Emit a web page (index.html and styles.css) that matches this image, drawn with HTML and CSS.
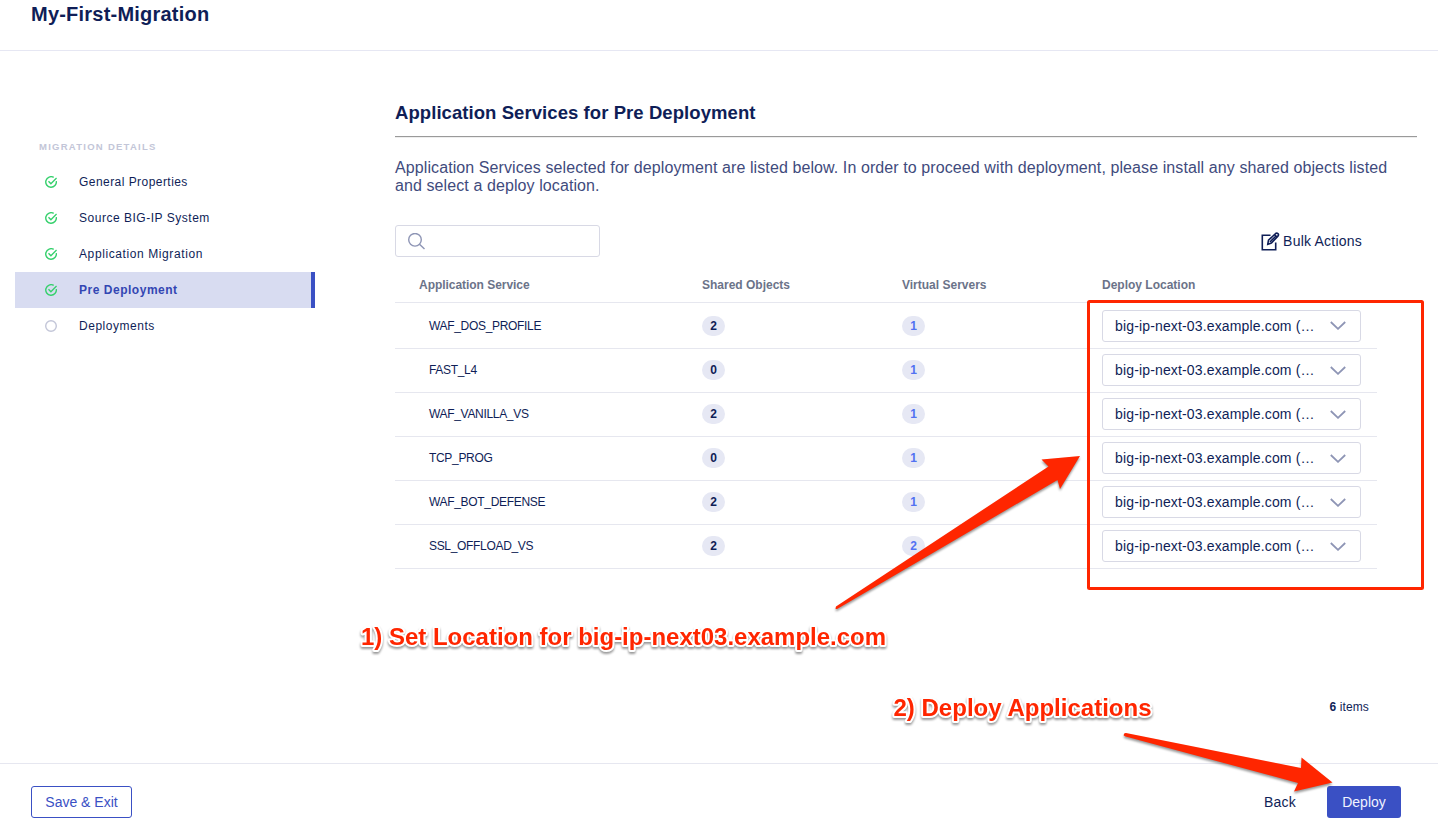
FILE: index.html
```html
<!DOCTYPE html>
<html lang="en">
<head>
<meta charset="utf-8">
<title>My-First-Migration</title>
<link rel="stylesheet" href="styles.css">
</head>
<body>
<svg class="defs" width="0" height="0" aria-hidden="true">
  <symbol id="done" viewBox="0 0 12 12"><path d="M11.3 5.2A5.3 5.3 0 1 1 8.700 1.4M3.5 5.300l2.400 2.400L11.600 2" fill="none" stroke="#35d06c" stroke-width="1.4"/></symbol>
  <symbol id="chevron" viewBox="0 0 16 9"><path d="M.8 1l7.2 6.8L15.2 1" fill="none" stroke="#8e95b5" stroke-width="1.8"/></symbol>
</svg>
<div class="page">
  <header class="header"><h1 class="title">My-First-Migration</h1></header>
  <div class="body">
    <nav class="steps">
      <div class="steps-title">MIGRATION DETAILS</div>
      <div class="step tight"><svg class="step-icon"><use href="#done"/></svg><span>General Properties</span></div>
      <div class="step"><svg class="step-icon"><use href="#done"/></svg><span>Source BIG-IP System</span></div>
      <div class="step wide"><svg class="step-icon"><use href="#done"/></svg><span>Application Migration</span></div>
      <div class="step active"><svg class="step-icon"><use href="#done"/></svg><span>Pre Deployment</span></div>
      <div class="step"><svg class="step-icon" viewBox="0 0 12 12"><circle cx="6" cy="6" r="5.3" fill="none" stroke="#c3c6d8" stroke-width="1.4"/></svg><span>Deployments</span></div>
    </nav>
    <main class="content">
      <h2 class="heading">Application Services for Pre Deployment</h2>
      <p class="intro">Application Services selected for deployment are listed below. In order to proceed with deployment, please install any shared objects listed<br>and select a deploy location.</p>
      <div class="toolbar">
        <div class="search"><svg width="18" height="18" viewBox="0 0 18 18" fill="none" stroke="#8e95b5" stroke-width="1.4"><circle cx="7" cy="6.800" r="6.3"/><path d="M11.500 11.200l5 4.900"/></svg></div>
        <div class="bulk"><svg width="19" height="19" viewBox="0 0 19 19" fill="none" stroke="#0f1e57" stroke-width="1.6"><path d="M9.500 3.300H1.300v14.400h13.400V10.500"/><path d="M6.800 12.200l.7-4L14.600 1.500q1.200-.9 2.300.1t.2 2.300L10.400 11z"/><path d="M13.500 2.600l2.500 2.500M9 10l5.500-5.500"/></svg><span>Bulk Actions</span></div>
      </div>
      <div class="table">
        <div class="row head"><span>Application Service</span><span>Shared Objects</span><span>Virtual Servers</span><span>Deploy Location</span></div>
        <div class="row first"><span class="name">WAF_DOS_PROFILE</span><span><b class="pill">2</b></span><span><b class="pill link">1</b></span><div class="select"><span>big-ip-next-03.example.com (…</span><svg class="chev"><use href="#chevron"/></svg></div></div>
        <div class="row"><span class="name">FAST_L4</span><span><b class="pill">0</b></span><span><b class="pill link">1</b></span><div class="select"><span>big-ip-next-03.example.com (…</span><svg class="chev"><use href="#chevron"/></svg></div></div>
        <div class="row"><span class="name">WAF_VANILLA_VS</span><span><b class="pill">2</b></span><span><b class="pill link">1</b></span><div class="select"><span>big-ip-next-03.example.com (…</span><svg class="chev"><use href="#chevron"/></svg></div></div>
        <div class="row"><span class="name">TCP_PROG</span><span><b class="pill">0</b></span><span><b class="pill link">1</b></span><div class="select"><span>big-ip-next-03.example.com (…</span><svg class="chev"><use href="#chevron"/></svg></div></div>
        <div class="row"><span class="name">WAF_BOT_DEFENSE</span><span><b class="pill">2</b></span><span><b class="pill link">1</b></span><div class="select"><span>big-ip-next-03.example.com (…</span><svg class="chev"><use href="#chevron"/></svg></div></div>
        <div class="row"><span class="name">SSL_OFFLOAD_VS</span><span><b class="pill">2</b></span><span><b class="pill link">2</b></span><div class="select"><span>big-ip-next-03.example.com (…</span><svg class="chev"><use href="#chevron"/></svg></div></div>
      </div>
      <div class="count"><b>6</b> items</div>
    </main>
  </div>
  <footer class="footer">
    <button class="btn outline">Save &amp; Exit</button>
    <div class="actions"><button class="btn plain">Back</button><button class="btn primary">Deploy</button></div>
  </footer>
  <svg class="notes" width="1438" height="833" viewBox="0 0 1438 833">
    <rect x="1088.500" y="301.500" width="334" height="287" rx="1" fill="none" stroke="#ff2600" stroke-width="3"/>
    <g class="arrows">
      <path d="M835.500 608.500L836 606.500L1048.500 466.500L1041.500 459.500L1080 456L1060 489L1057.500 480L838 608.500Q836 609.500 835.500 608.500Z"/>
      <path d="M1123.700 735.500Q1123.500 732.800 1126 733L1301 768L1301.500 757.500L1332.500 782.500L1294 791.500L1298 783L1125.500 736.500Z"/>
    </g>
    <g class="labels">
      <text x="361" y="645" textLength="525" lengthAdjust="spacingAndGlyphs">1) Set Location for big-ip-next03.example.com</text>
      <text x="893.500" y="716" textLength="258" lengthAdjust="spacingAndGlyphs">2) Deploy Applications</text>
    </g>
  </svg>
</div>
</body>
</html>
```
FILE: styles.css
```css
* { box-sizing: border-box; }
body { margin: 0; background: #fff; color: #0f1e57; font-family: "Liberation Sans", Arial, sans-serif; }
.defs { position: absolute; }
.page { position: relative; width: 1438px; height: 833px; display: flex; flex-direction: column; overflow: hidden; }
.header { height: 51px; padding: 2px 31px 0; border-bottom: 1px solid #e6e7f3; }
.title { margin: 0; font-size: 20px; line-height: 24px; letter-spacing: .22px; }
.body { flex: 1; display: flex; }
.steps { width: 315px; padding: 89px 0 0 15px; }
.steps-title { height: 24px; padding-left: 24px; font-size: 9.5px; line-height: 13px; font-weight: bold; letter-spacing: 1.26px; color: #c3c6d8; }
.step { height: 36px; display: flex; align-items: center; gap: 22px; padding-left: 30px; font-size: 12px; letter-spacing: .52px; }
.tight { letter-spacing: .45px; }
.wide { letter-spacing: .6px; }
.step-icon { width: 12px; height: 12px; }
.active { background: #d8dcf1; border-right: 4px solid #3a50c4; color: #3346b3; font-weight: bold; }
.content { margin-left: 80px; width: 1022px; padding-top: 50px; }
.heading { margin: 0; height: 36px; padding-bottom: 11px; font-size: 18.5px; line-height: 24px; letter-spacing: .07px; border-bottom: 1px solid #9a9a9a; box-shadow: 0 1px #eee; }
.intro { margin: 22px 0 0; font-size: 16px; line-height: 18px; letter-spacing: .093px; color: #3f4b7d; white-space: nowrap; }
.toolbar { margin-top: 30px; width: 967px; display: flex; justify-content: space-between; align-items: center; }
.search { width: 205px; height: 32px; padding: 7px 12px; border: 1px solid #d8d9e5; border-radius: 3px; }
.bulk { display: flex; align-items: center; gap: 3px; font-size: 14px; letter-spacing: .22px; }
.table { width: 982px; }
.row { height: 44px; display: grid; grid-template-columns: 307px 200px 200px 259px; align-items: center; padding-bottom: 1px; border-bottom: 1px solid #e6e7ef; }
.head { height: 46px; padding: 10px 0 0; font-size: 12px; font-weight: bold; color: #6b7389; }
.head > :first-child { padding-left: 24px; letter-spacing: -.04px; }
.first { height: 46px; padding-top: 1px; }
.name { padding-left: 34px; font-size: 12px; letter-spacing: -.32px; }
.pill { display: block; width: 23px; height: 20px; border-radius: 10px; background: #e6e8f4; font-size: 12px; line-height: 20px; text-align: center; }
.link { color: #5272f2; }
.select { height: 32px; display: flex; align-items: center; justify-content: space-between; padding: 0 14px 0 12px; border: 1px solid #d8d9e5; border-radius: 3px; font-size: 14px; letter-spacing: .15px; }
.chev { width: 16px; height: 9px; }
.count { margin-top: 131px; width: 974px; text-align: right; font-size: 12px; line-height: 14px; letter-spacing: .12px; }
.footer { height: 70px; border-top: 1px solid #e6e7f0; padding: 22px 37px 0 31px; display: flex; justify-content: space-between; }
.btn { height: 32px; padding: 0; border: 0; border-radius: 3px; background: none; font: 14px "Liberation Sans", Arial, sans-serif; color: #0f1e57; }
.outline { width: 101px; border: 1px solid #3a50c4; color: #3a50c4; }
.actions { display: flex; gap: 31px; }
.plain { letter-spacing: .2px; }
.primary { width: 74px; background: #3a50c4; color: #f1f3ff; }
.notes { position: absolute; left: 0; top: 0; pointer-events: none; }
.arrows { fill: #ff2600; filter: drop-shadow(0 2px 1px rgba(0,0,0,.4)); }
.labels { font-size: 24px; font-weight: bold; fill: #ff2600; stroke: #fff; stroke-width: 4px; stroke-linejoin: round; paint-order: stroke; filter: drop-shadow(0 2px 1px rgba(0,0,0,.4)); }
```
